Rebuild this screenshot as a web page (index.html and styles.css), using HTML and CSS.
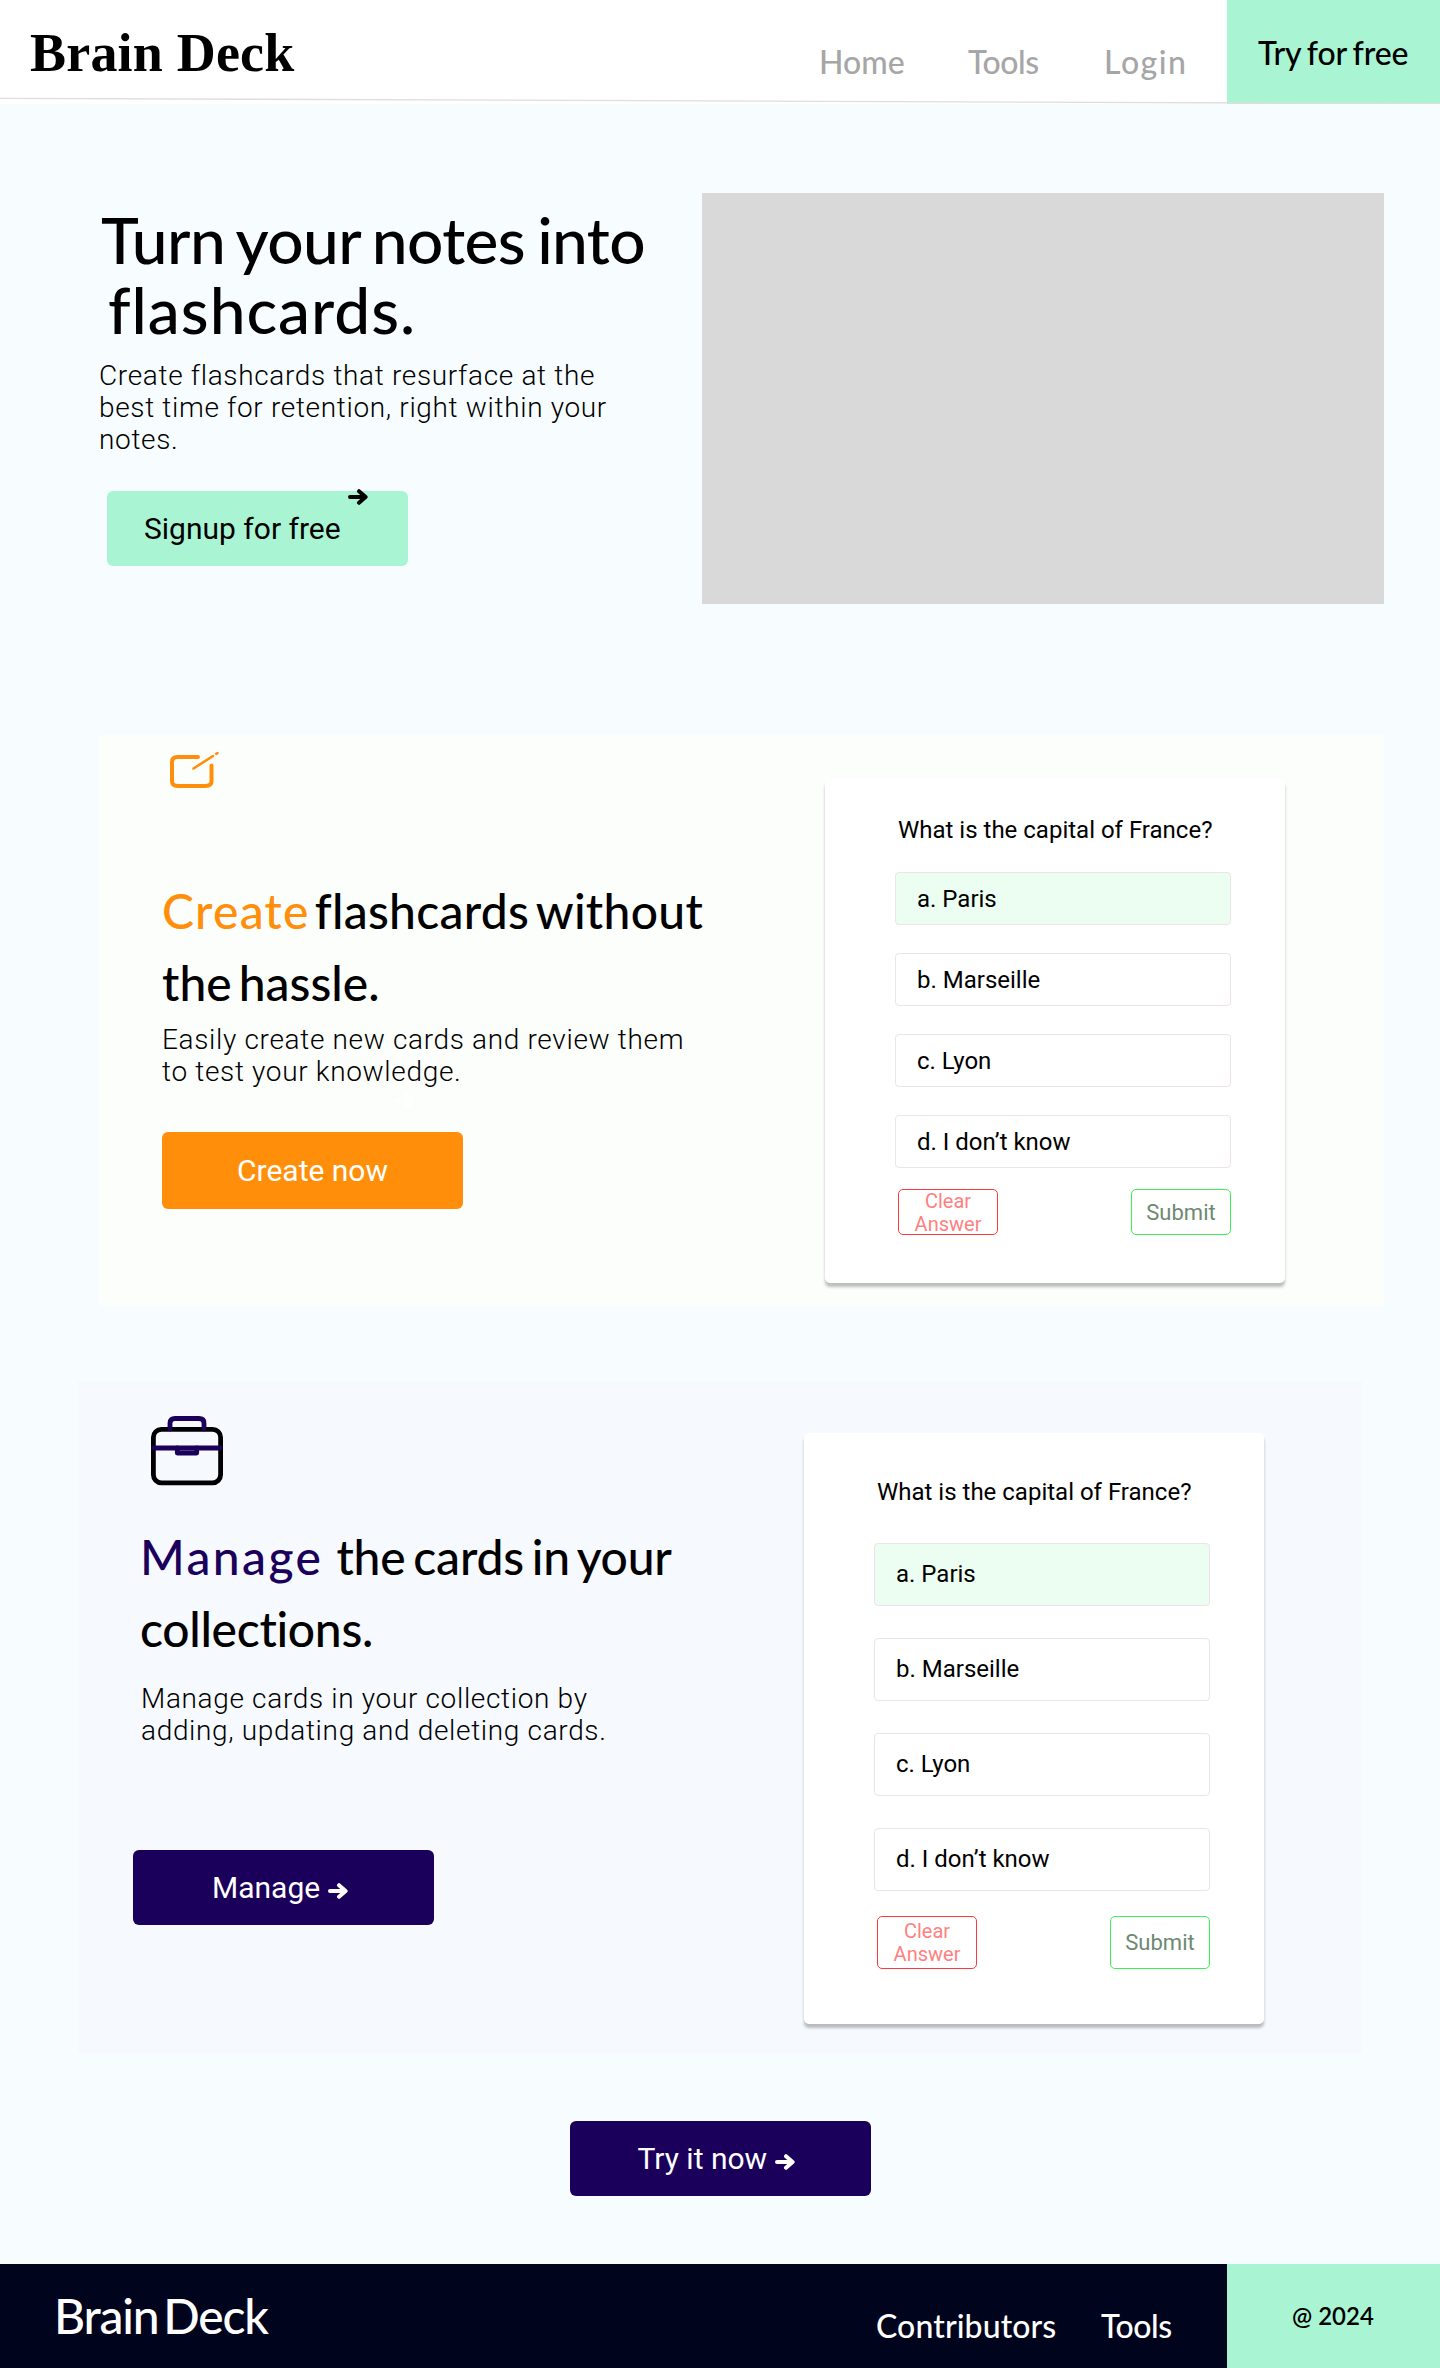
FILE: index.html
```html
<!DOCTYPE html>
<html lang="en">
<head>
<meta charset="utf-8">
<title>Brain Deck</title>
<link rel="stylesheet" href="styles.css">
</head>
<body>
<svg class="defs" width="0" height="0" aria-hidden="true">
  <symbol id="arrow" viewBox="0 0 20 16">
    <path d="M2 8h15M11 2.2 17.6 8 11 13.8" fill="none" stroke="currentColor" stroke-width="4" stroke-linecap="round" stroke-linejoin="round"/>
  </symbol>
</svg>

<header class="header">
  <a class="brand">Brain Deck</a>
  <nav class="nav"><a>Home</a><a class="tools">Tools</a><a class="login">Login</a></nav>
  <a class="try">Try for free</a>
  <svg class="rule" viewBox="0 0 1440 104" width="1440" height="104"><path d="M0 98.3 1440 103.6" stroke="#dedede" stroke-width="1.3"/></svg>
</header>

<main>
  <section class="hero">
    <div class="hero-copy">
      <h1><span class="l1">Turn your notes into</span><span class="l2">flashcards.</span></h1>
      <p>Create flashcards that resurface at the<br>best time for retention, right within your<br>notes.</p>
      <a class="btn btn-mint">Signup for free<svg class="arrow"><use href="#arrow"/></svg></a>
    </div>
    <div class="picture"></div>
  </section>

  <section class="feature create">
    <div class="copy">
      <svg class="icon" width="50" height="37" viewBox="0 0 50 37" fill="none" stroke="#ff8f0b" stroke-linecap="round" stroke-linejoin="round">
        <path d="M28 5H7.500Q2 5 2 10V29Q2 34 7.500 34H35.500Q41.500 34 41.500 29V13.500" stroke-width="4"/>
        <path d="M23.500 16.500 43 4" stroke-width="2.600"/>
        <path d="M46.300 1.800 47.500 1.200" stroke-width="2.600"/>
      </svg>
      <h2><span class="line"><em>Create</em><span class="rest">flashcards without</span></span><span class="line second">the hassle.</span></h2>
      <p>Easily create new cards and review them<br>to test your knowledge.</p>
      <svg class="arrow ghost"><use href="#arrow"/></svg>
      <a class="btn btn-orange">Create now</a>
    </div>
    <div class="card">
      <h3>What is the capital of France?</h3>
      <ul>
        <li class="picked">a. Paris</li>
        <li>b. Marseille</li>
        <li>c. Lyon</li>
        <li>d. I don’t know</li>
      </ul>
      <div class="actions"><button class="clear">Clear<br>Answer</button><button class="submit">Submit</button></div>
    </div>
  </section>

  <section class="feature manage">
    <div class="copy">
      <svg class="icon" width="72" height="70" viewBox="0 0 72 70" fill="none" stroke-width="4.800" stroke-linecap="round" stroke-linejoin="round">
        <rect x="2.400" y="13.300" width="67.200" height="53.500" rx="8" stroke="#000"/>
        <path d="M19 13V7Q19 2.500 24 2.500H48Q53 2.500 53 7V13" stroke="#1b005b"/>
        <path d="M2.400 32H69.600" stroke="#1b005b"/>
        <path d="M26.300 32V37H45.700V32" stroke="#1b005b"/>
      </svg>
      <h2><span class="line"><em>Manage</em><span class="rest">the cards in your</span></span><span class="line second">collections.</span></h2>
      <p>Manage cards in your collection by<br>adding, updating and deleting cards.</p>
      <a class="btn btn-navy">Manage<svg class="arrow"><use href="#arrow"/></svg></a>
    </div>
    <div class="card tall">
      <h3>What is the capital of France?</h3>
      <ul>
        <li class="picked">a. Paris</li>
        <li>b. Marseille</li>
        <li>c. Lyon</li>
        <li>d. I don’t know</li>
      </ul>
      <div class="actions"><button class="clear">Clear<br>Answer</button><button class="submit">Submit</button></div>
    </div>
  </section>

  <a class="btn btn-navy try-now">Try it now<svg class="arrow"><use href="#arrow"/></svg></a>
</main>

<footer class="footer">
  <a class="footer-brand">Brain Deck</a>
  <nav class="footer-nav"><a>Contributors</a><a class="tools">Tools</a></nav>
  <div class="year">@ 2024</div>
</footer>
</body>
</html>
```
FILE: styles.css
```css
* { box-sizing: border-box; }
body {
  margin: 0;
  width: 1440px;
  background: #f7fdff;
  color: #000;
  font-family: Roboto, sans-serif;
}
h1, h2, h3, p, ul { margin: 0; padding: 0; font-weight: 400; }
.defs { display: block; height: 0; }
.arrow { width: 20px; height: 16px; flex: none; }

/* header */
.header {
  position: relative;
  display: grid;
  grid-template-columns: 819px 408px 213px;
  height: 104px;
  background: #fff;
}
.brand {
  padding: 23px 0 0 30px;
  font: bold 54px/60px "Liberation Serif", serif;
  letter-spacing: .2px;
}
.nav {
  display: grid;
  grid-template-columns: 149px 136px auto;
  padding-top: 42px;
  color: #a6a6a6;
  font: 500 32px/40px Lato, sans-serif;
}
.nav .tools { letter-spacing: -.5px; }
.nav .login { letter-spacing: 1.5px; }
.try {
  padding: 33px 0 0 31px;
  background: #a9f5d3;
  font: 500 32px/40px Lato, sans-serif;
  letter-spacing: -.1px;
  word-spacing: -2px;
}
.rule { position: absolute; left: 0; top: 0; }

/* hero */
.hero {
  display: flex;
  height: 631px;
  padding-top: 89px;
}
.hero-copy { width: 702px; padding: 12px 0 0 98px; }
h1 { font: 500 64px/70px Lato, sans-serif; }
h1 span { display: block; white-space: nowrap; }
h1 .l1 { padding-left: 3px; letter-spacing: -.6px; word-spacing: -3.500px; }
h1 .l2 { padding-left: 10px; letter-spacing: 1px; }
p { font-size: 28px; line-height: 32px; font-weight: 300; letter-spacing: .66px; }
.hero p { margin: 15px 0 0 1px; }
.picture { width: 682px; height: 411px; background: #d9d9d9; }

/* buttons */
.btn {
  position: relative;
  display: flex;
  align-items: center;
  width: 301px;
  height: 75px;
  border-radius: 6px;
  font-size: 30px;
  line-height: 35px;
}
.btn-mint { margin: 35px 0 0 9px; padding-left: 37px; background: #a9f5d3; }
.btn-mint .arrow { position: absolute; left: 241px; top: -2px; }
.btn-orange { height: 77px; padding-left: 75px; background: #ff8f0b; color: #fff; }
.btn-navy { gap: 8px; background: #1b005b; color: #fff; }
.btn-navy .arrow { margin-top: 7px; }

/* feature panels */
.feature { display: flex; }
.feature .icon { display: block; }
h2 { font: 500 48px/72px Lato, sans-serif; }
h2 em { font-style: normal; }
.line { display: flex; white-space: nowrap; }
.create { width: 1285px; height: 571px; margin-left: 99px; background: #fcfefb; }
.create .copy { width: 726px; padding: 17px 0 0 63px; }
.create .icon { margin-left: 8px; }
.create h2 { margin-top: 86px; }
.create em { color: #ff8f0b; letter-spacing: 1.23px; }
.create .line { gap: 5px; }
.create .rest { letter-spacing: .3px; word-spacing: -5px; }
.create .second { word-spacing: -5px; }
.create p { margin-top: 5px; }
.ghost { display: block; margin: 5px 0 23px 233px; color: #fff; }

.manage { width: 1284px; height: 672px; margin: 75px 0 0 78px; background: #f6f9fe; }
.manage .copy { width: 726px; padding: 35px 0 0 62px; }
.manage .icon { margin-left: 11px; }
.manage h2 { margin-top: 35px; }
.manage em { color: #1b005b; letter-spacing: 2.4px; }
.manage .line { gap: 13px; }
.manage .rest { letter-spacing: -.2px; word-spacing: -4px; }
.manage .second { letter-spacing: -.3px; }
.manage p { margin: 18px 0 0 1px; }
.manage .btn { margin: 103px 0 0 -7px; padding-left: 79px; }

/* quiz card */
.card {
  width: 460px;
  height: 504px;
  margin-top: 44px;
  padding: 37px 54px 0 70px;
  border-radius: 5px;
  background: #fff;
  box-shadow: 0 4px 3px rgba(0, 0, 0, .25);
}
h3 { margin-left: 3px; font-size: 24px; line-height: 28px; white-space: nowrap; }
.card ul { display: grid; gap: 28px; margin-top: 28px; list-style: none; }
.card li {
  display: flex;
  align-items: center;
  height: 53px;
  padding-left: 21px;
  border: 1px solid #ece4e6;
  border-radius: 4px;
  font-size: 24px;
}
.card .picked { background: #ebfef1; }
.actions { display: flex; justify-content: space-between; margin: 21px 0 0 3px; }
.actions button {
  width: 100px;
  height: 46px;
  padding: 0;
  border: 1.500px solid;
  border-radius: 5px;
  background: none;
  font-family: inherit;
}
.actions .clear { border-color: #fb3a3e; color: #ff8080; font-size: 20px; line-height: 23px; }
.actions .submit { border-color: #3df056; color: #6b8a70; font-size: 22px; }
.tall { height: 591px; margin-top: 52px; padding-top: 45px; }
.tall ul { gap: 32.500px; margin-top: 37px; }
.tall li { height: 62.500px; }
.tall .actions { margin-top: 25.500px; }
.tall .actions button { height: 53px; }

.try-now { margin: 68px 0 68px 569.500px; padding-left: 68px; }

/* footer */
.footer {
  display: grid;
  grid-template-columns: 876px 351px 213px;
  height: 104px;
  background: #00041c;
  color: #fff;
}
.footer-brand {
  padding: 28px 0 0 54px;
  font: 500 48px/48px Lato, sans-serif;
  letter-spacing: -1.2px;
  word-spacing: -6px;
}
.footer-nav {
  display: grid;
  grid-template-columns: 225px auto;
  padding-top: 42px;
  font: 500 32px/40px Lato, sans-serif;
  letter-spacing: .1px;
}
.footer-nav .tools { letter-spacing: -.5px; }
.year {
  padding: 37px 0 0 65px;
  background: #a9f5d3;
  color: #000;
  font: 600 24px/30px Lato, sans-serif;
}
```
